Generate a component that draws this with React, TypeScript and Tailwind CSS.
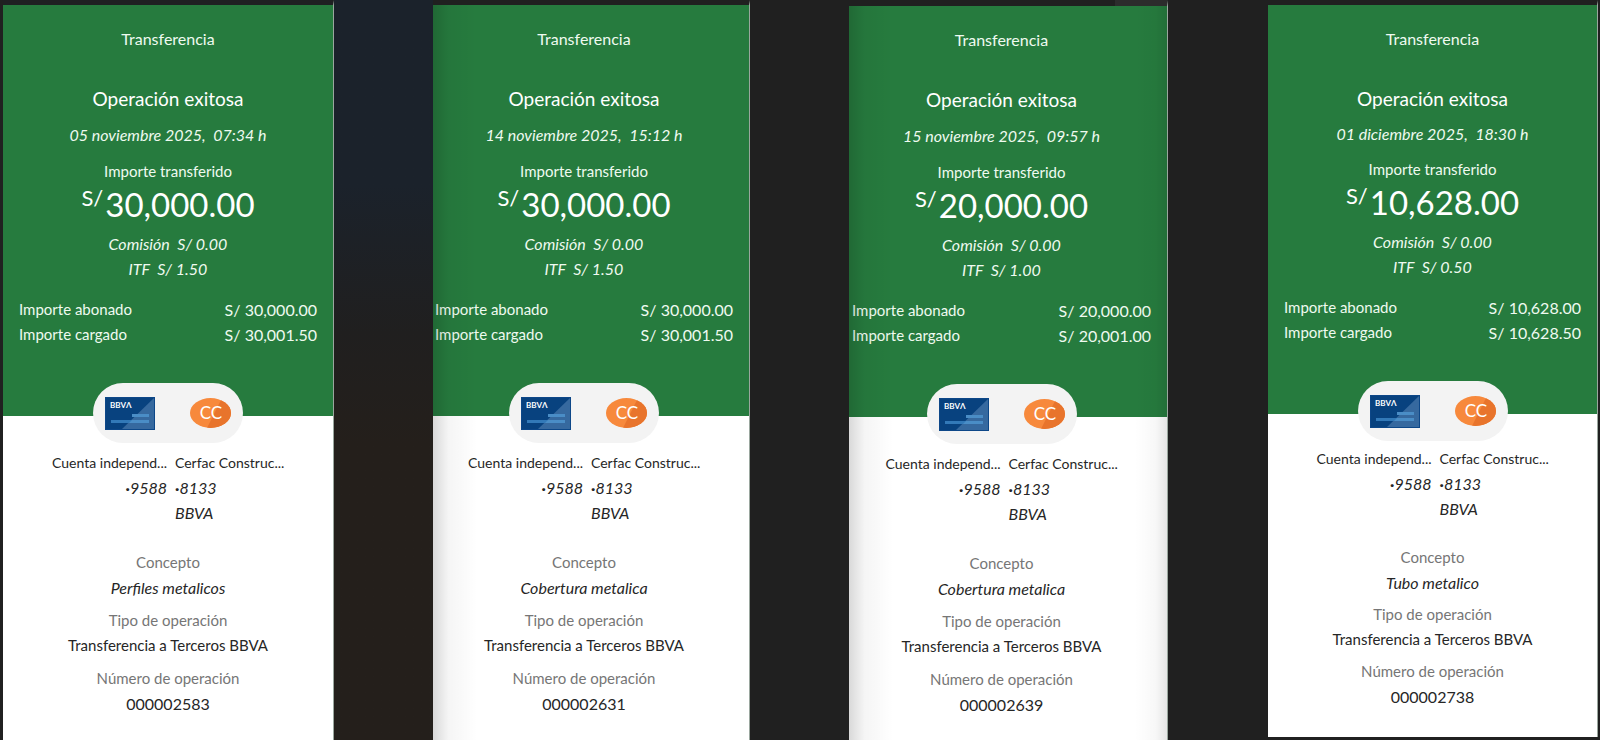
import React from 'react';
import clsx from 'clsx';

interface Receipt {
  id: string;
  date: string;
  amount: string;
  itf: string;
  credited: string;
  charged: string;
  concept: string;
  compact?: boolean;
  cardClass: string;
  contentClass: string;
  shadeLeft?: boolean;
  shadeRight?: boolean;
}

const receipts: Receipt[] = [
  {
    id: '000002583',
    date: '05 noviembre 2025,  07:34 h',
    amount: '30,000.00',
    itf: '1.50',
    credited: '30,000.00',
    charged: '30,001.50',
    concept: 'Perfiles metalicos',
    cardClass: 'border-t-[5px] border-t-[#1f2022]',
    contentClass: 'px-4',
  },
  {
    id: '000002631',
    date: '14 noviembre 2025,  15:12 h',
    amount: '30,000.00',
    itf: '1.50',
    credited: '30,000.00',
    charged: '30,001.50',
    concept: 'Cobertura metalica',
    cardClass: 'border-t-[5px] border-t-[#202020]',
    contentClass: 'pl-[2px] pr-4',
    shadeLeft: true,
  },
  {
    id: '000002639',
    date: '15 noviembre 2025,  09:57 h',
    amount: '20,000.00',
    itf: '1.00',
    credited: '20,000.00',
    charged: '20,001.00',
    concept: 'Cobertura metalica',
    cardClass: 'border-t-[6px] border-t-[#202020]',
    contentClass: 'pl-[3px] pr-4',
    shadeLeft: true,
    shadeRight: true,
  },
  {
    id: '000002738',
    date: '01 diciembre 2025,  18:30 h',
    amount: '10,628.00',
    itf: '0.50',
    credited: '10,628.00',
    charged: '10,628.50',
    concept: 'Tubo metalico',
    compact: true,
    cardClass: 'border-t-[5px] border-t-[#202020] mb-[3px]',
    contentClass: 'px-4',
  },
];

const BankCard: React.FC = () => (
  <svg width="50" height="33" viewBox="0 0 50 33" role="img" aria-label="BBVA">
    <rect width="50" height="33" fill="#08427f" />
    <path d="M50 0V33H16Z" fill="#36699f" />
    <rect x="27" y="17" width="17" height="3" fill="#4a8dc6" />
    <rect x="6" y="23" width="38" height="3" fill="#3279b8" />
    <path d="M27 23H44V26H24Z" fill="#4a8dc6" />
    <rect x="0.5" y="0.5" width="49" height="32" fill="none" stroke="#0d4788" />
    <text x="5" y="11" fontSize="8" fontWeight="700" fill="#fff" fontFamily="Lato, sans-serif">
      BBVΛ
    </text>
  </svg>
);

const Initials: React.FC = () => (
  <svg width="41" height="30" viewBox="0 0 41 30" role="img" aria-label="CC">
    <clipPath id="oval">
      <ellipse cx="20.5" cy="15" rx="20.5" ry="15" />
    </clipPath>
    <g clipPath="url(#oval)">
      <rect width="41" height="30" fill="#f7893c" />
      <path d="M32 0H41V30H17Z" fill="#e8742c" />
    </g>
    <text x="21" y="21" textAnchor="middle" fontSize="17" fill="#fff" fontFamily="Lato, sans-serif">
      CC
    </text>
  </svg>
);

interface DetailProps {
  label: string;
  value: string;
  className: string;
  valueClass: string;
}

const Detail: React.FC<DetailProps> = ({ label, value, className, valueClass }) => (
  <div className={className}>
    <dt className="text-[15px] leading-[25px] text-[#767676]">{label}</dt>
    <dd className={valueClass}>{value}</dd>
  </div>
);

const ReceiptCard: React.FC<{ receipt: Receipt }> = ({ receipt }) => {
  const { compact } = receipt;

  return (
    <article className={clsx('relative border-r border-r-[#9aa79e] bg-white text-base leading-[25px] text-[#262626]', receipt.cardClass)}>
      <header className={clsx('bg-[#267b3e] pt-[21px] pb-[69px] text-center text-[#effaf0]', receipt.contentClass)}>
        <h1>Transferencia</h1>
        <h2 className="mt-[33px] text-[19px] leading-[29px] text-white">Operación exitosa</h2>
        <p className={clsx('whitespace-pre italic', compact ? 'mt-2' : 'mt-[9px]')}>{receipt.date}</p>
        <p className={clsx('text-[15px] leading-[25px]', compact ? 'mt-[11px]' : 'mt-3')}>Importe transferido</p>
        <p className="flex items-start justify-center text-[33px] leading-10 text-white">
          <span className="mr-[2px] text-[22px] leading-7">S/</span>
          {receipt.amount}
        </p>
        <p className="mt-[7px] whitespace-pre italic">Comisión  S/ 0.00</p>
        <p className="whitespace-pre italic">ITF  S/ {receipt.itf}</p>
        <dl className="mt-4">
          <div className="flex justify-between">
            <dt className="text-[15px] leading-[25px]">Importe abonado</dt>
            <dd>S/ {receipt.credited}</dd>
          </div>
          <div className="flex justify-between">
            <dt className="text-[15px] leading-[25px]">Importe cargado</dt>
            <dd>S/ {receipt.charged}</dd>
          </div>
        </dl>
      </header>

      <div className={clsx('relative z-10 -mt-[33px] text-center', receipt.contentClass)}>
        <div className="mx-auto flex h-[60px] w-[150px] items-center justify-between rounded-full bg-[#f3f3f3] px-3">
          <BankCard />
          <Initials />
        </div>

        <div className={clsx('grid grid-cols-2 gap-x-2 pl-[6px]', compact ? 'mt-[5px]' : 'mt-[7px]')}>
          <div className="text-right whitespace-nowrap">
            <p className="text-sm leading-[25px]">Cuenta independ...</p>
            <p className="italic">
              <b>·</b>9588
            </p>
          </div>
          <div className="text-left whitespace-nowrap">
            <p className="text-sm leading-[25px]">Cerfac Construc...</p>
            <p className="italic">
              <b>·</b>8133
            </p>
            <p className="italic">BBVA</p>
          </div>
        </div>

        <dl>
          <Detail label="Concepto" value={receipt.concept} className={compact ? 'mt-6' : 'mt-[25px]'} valueClass="italic" />
          <Detail
            label="Tipo de operación"
            value="Transferencia a Terceros BBVA"
            className={compact ? 'mt-[7px]' : 'mt-2'}
            valueClass="text-[15px] leading-[25px]"
          />
          <Detail label="Número de operación" value={receipt.id} className={compact ? 'mt-[7px]' : 'mt-2'} valueClass="text-base leading-[25px]" />
        </dl>
      </div>

      {receipt.shadeLeft && (
        <div className="pointer-events-none absolute inset-y-0 left-0 w-11 bg-linear-to-r from-black/15 via-black/4 via-35% to-transparent" />
      )}
      {receipt.shadeRight && (
        <>
          <div className="pointer-events-none absolute inset-y-0 right-0 w-8 bg-linear-to-l from-black/10 via-black/3 via-35% to-transparent" />
          <div className="pointer-events-none absolute right-0 bottom-full h-[6px] w-[52px] bg-[#2c2c2c]" />
        </>
      )}
    </article>
  );
};

const App: React.FC = () => {
  return (
    <main className="grid min-h-screen grid-cols-[331fr_99fr_317fr_99fr_319fr_100fr_330fr] bg-[#202020] pr-[2px] pl-[3px] font-['Lato',sans-serif]">
      {receipts.map((receipt, index) => (
        <React.Fragment key={receipt.id}>
          {index > 0 && (
            <div className={clsx(index === 1 && 'bg-linear-to-b from-[#1b222b] from-25% via-[#201f1f] via-45% to-[#241f1b] to-60%')} />
          )}
          <ReceiptCard receipt={receipt} />
        </React.Fragment>
      ))}
    </main>
  );
};

export default App;
